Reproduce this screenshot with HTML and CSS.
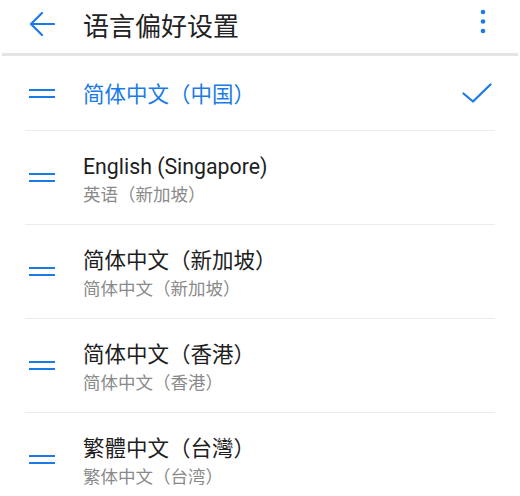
FILE: index.html
```html
<!DOCTYPE html>
<html>
<head>
  <meta charset="utf-8">
  <title>语言偏好设置</title>
  <link rel="stylesheet" href="styles.css">
</head>

<body>
  <div id="toolbar">
    <a href="#" class="back" aria-label="返回">
      <svg width="26" height="24" viewBox="0 0 26 24">
        <path d="M25 12H2M13 1L2 12l11 11" fill="none" stroke="currentColor" stroke-width="2.2" stroke-linecap="round" stroke-linejoin="round"/>
      </svg>
    </a>
    <h1>语言偏好设置</h1>
    <a href="#" class="more" aria-label="更多">
      <svg width="8" height="40" viewBox="0 0 8 40">
        <circle cx="4" cy="8" r="2.3" fill="currentColor"/>
        <circle cx="4" cy="17.5" r="2.3" fill="currentColor"/>
        <circle cx="4" cy="27" r="2.3" fill="currentColor"/>
      </svg>
    </a>
  </div>

  <ul class="lang-list">
    <li class="lang current">
      <span class="handle"></span>
      <div class="label">
        <div class="name">简体中文（中国）</div>
      </div>
      <svg class="check" width="30" height="20" viewBox="0 0 30 20">
        <polyline points="1.5,10.5 11,18.5 28.5,1.5" fill="none" stroke="currentColor" stroke-width="2.2" stroke-linecap="round" stroke-linejoin="round"/>
      </svg>
    </li>
    <li class="lang">
      <span class="handle"></span>
      <div class="label">
        <div class="name" lang="en">English (Singapore)</div>
        <div class="sub">英语（新加坡）</div>
      </div>
    </li>
    <li class="lang">
      <span class="handle"></span>
      <div class="label">
        <div class="name">简体中文（新加坡）</div>
        <div class="sub">简体中文（新加坡）</div>
      </div>
    </li>
    <li class="lang">
      <span class="handle"></span>
      <div class="label">
        <div class="name">简体中文（香港）</div>
        <div class="sub">简体中文（香港）</div>
      </div>
    </li>
    <li class="lang">
      <span class="handle"></span>
      <div class="label">
        <div class="name">繁體中文（台灣）</div>
        <div class="sub">繁体中文（台湾）</div>
      </div>
    </li>
  </ul>
</body>
</html>
```

FILE: styles.css
```css
body {
  font-family: Roboto, "Noto Sans CJK SC", sans-serif;
  margin: 0;
  background-color: #FFFFFF;
  color: #1E1E1E;
  overflow: hidden;
}

#toolbar {
  height: 48px;
  padding: 0 31px 5px 29px;
  display: flex;
  align-items: center;
  border-bottom: 3px solid #E4E4E4;
  margin: 0 2px;
}

#toolbar a {
  color: #1A7AE6;
  display: flex;
}

#toolbar .back {
  margin-left: -2px;
}

#toolbar h1 {
  margin: 0 0 0 28px;
  font-size: 26px;
  font-weight: normal;
  color: #222222;
}

#toolbar .more {
  margin-left: auto;
}

.lang-list {
  list-style: none;
  margin: 0 25px;
  padding: 0;
}

.lang {
  height: 93px;
  display: flex;
  align-items: center;
  border-bottom: 1px solid #ECECEC;
}

.lang.current {
  height: 74px;
}

.handle {
  width: 26px;
  height: 9px;
  margin: 0 28px 0 4px;
  border-top: 2px solid #1A7AE6;
  border-bottom: 2px solid #1A7AE6;
  box-sizing: border-box;
  flex-shrink: 0;
}

.label {
  flex: 1;
  padding-top: 8px;
}

.name {
  font-size: 21.5px;
  line-height: 28px;
}

.name:lang(en) {
  font-size: 21.3px;
}

.current .name {
  color: #1A7AE6;
}

.current .label {
  padding-top: 4px;
}

.sub {
  font-size: 17.5px;
  line-height: 29px;
  color: #8A8A8A;
}

.check {
  color: #1A7AE6;
  margin-right: 3px;
}
```
